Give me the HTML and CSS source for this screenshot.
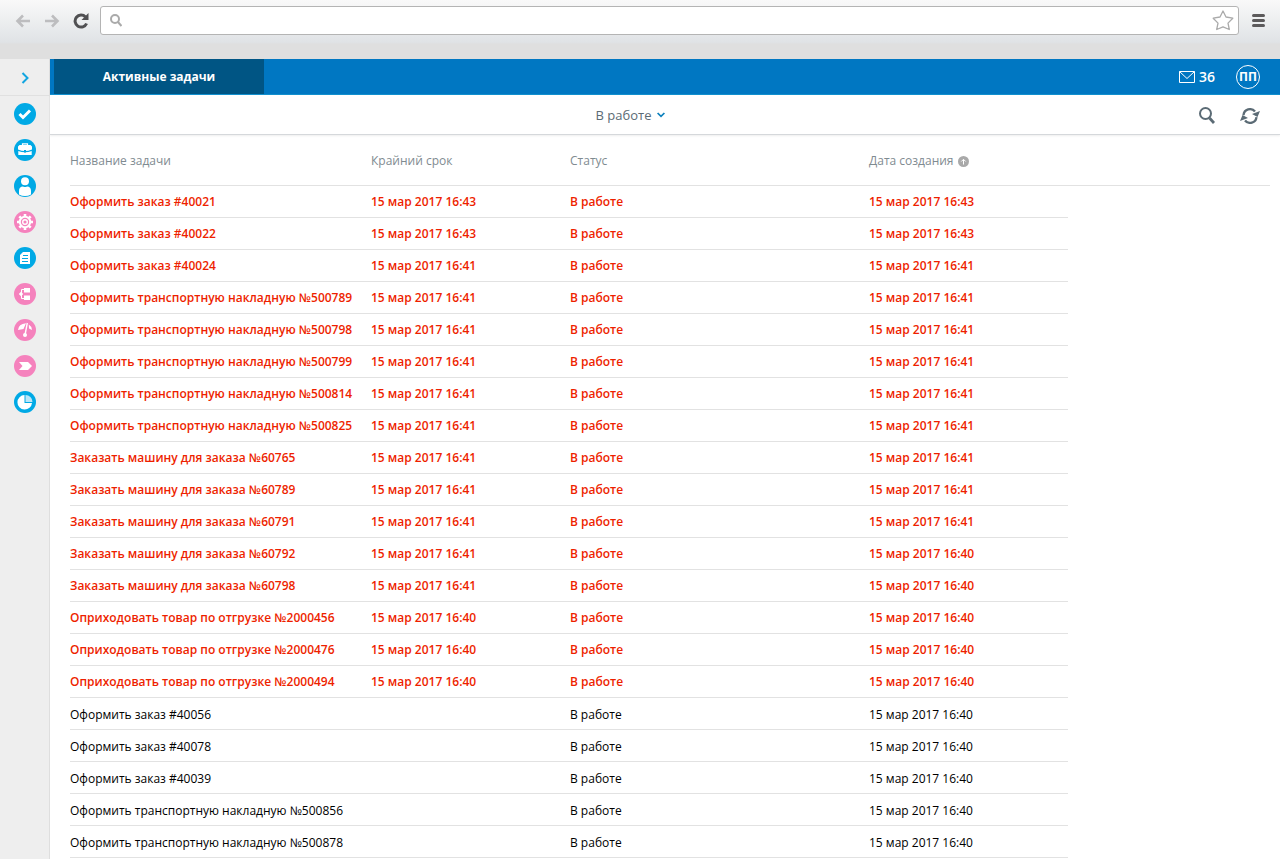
FILE: index.html
```html
<!DOCTYPE html>
<html lang="ru">
<head>
<meta charset="utf-8">
<title>Активные задачи</title>
<link rel="stylesheet" href="styles.css">
</head>
<body>
<div class="browser">
  <button class="nav-button" aria-label="Назад"><svg width="16" height="14" viewBox="0 0 16 14" fill="none" stroke="#bdbdbf" stroke-width="2.6"><path d="M8 1.500 2.500 7l5.500 5.500M2 7h13"/></svg></button>
  <button class="nav-button" aria-label="Вперёд"><svg width="16" height="14" viewBox="0 0 16 14" fill="none" stroke="#bdbdbf" stroke-width="2.6"><path d="m8 1.500 5.500 5.500L8 12.500M14 7H1"/></svg></button>
  <button class="nav-button" aria-label="Обновить страницу"><svg width="16" height="16" viewBox="0 0 16 16"><path d="M12.5 4A6 6 0 1 0 13.6 10.5" fill="none" stroke="#505052" stroke-width="3"/><path d="M15.5 0v7H8.5z" fill="#505052"/></svg></button>
  <div class="address">
    <svg width="12" height="13" viewBox="0 0 12 13" fill="none" stroke="#aaa" stroke-width="2"><circle cx="5" cy="5" r="4"/><path d="m8 8 3.500 4"/></svg>
    <input class="address-input" type="text" aria-label="Адрес">
    <button class="star" aria-label="В закладки"><svg width="22" height="21" viewBox="0 0 22 21" fill="#fff" stroke="#aaa" stroke-width="1.300" stroke-linejoin="round"><path d="m11 1 3 6 6.800 1.200-4.800 4.900 1.300 6.400L11 16.800l-6.300 2.700L6 13.100 1.200 8.200 8 7z"/></svg></button>
  </div>
  <button class="nav-button" aria-label="Меню"><svg width="13" height="13" viewBox="0 0 13 13" stroke="#5c5a5b" stroke-width="3" stroke-linecap="round"><path d="M1.500 1.500h10M1.500 6.500h10M1.500 11.500h10"/></svg></button>
</div>
<div class="app">
  <nav class="sidebar" aria-label="Разделы">
    <button class="expand" aria-label="Развернуть"><svg width="8" height="12" viewBox="0 0 8 12" fill="none" stroke="#12a5e0" stroke-width="2"><path d="m1.500 1 5 5-5 5"/></svg></button>
    <a class="section" href="#" aria-label="Задачи"><svg viewBox="0 0 22 22"><circle cx="11" cy="11" r="11" fill="#00a9e5"/><path d="m5.500 11 3.500 3.500 7-7" fill="none" stroke="#fff" stroke-width="3"/></svg></a>
    <a class="section" href="#" aria-label="Портфель"><svg viewBox="0 0 22 22"><circle cx="11" cy="11" r="11" fill="#00a9e5"/><path d="M8.500 6.500V4.800h5v1.700" fill="none" stroke="#fff" stroke-width="1.200"/><path d="M5.500 6h11L18 7.500v3q-7 3-14 0v-3zM4.300 12q6.700 2.600 13.400 0v4H4.300z" fill="#fff"/><path d="M10 11h2v2.500h-2z" fill="#00a9e5"/></svg></a>
    <a class="section" href="#" aria-label="Сотрудники"><svg viewBox="0 0 22 22"><circle cx="11" cy="11" r="11" fill="#00a9e5"/><circle cx="11" cy="6.200" r="4" fill="#fff"/><path d="M5 19.500v-3.500q0-4.500 4-4.500 2 1 4 0 4 0 4 4.500v3.500q-6 3-12 0z" fill="#fff"/></svg></a>
    <a class="section" href="#" aria-label="Настройки"><svg viewBox="0 0 22 22"><circle cx="11" cy="11" r="11" fill="#f582bd"/><circle cx="11" cy="11" r="5.200" fill="none" stroke="#fff" stroke-width="2"/><circle cx="11" cy="11" r="2.300" fill="none" stroke="#fff" stroke-width="1.400"/><path d="M11 3v2.500M11 16.500V19M3 11h2.500M16.500 11H19M5.300 5.300l1.800 1.800M14.900 14.900l1.800 1.800M5.300 16.700l1.800-1.800M14.900 7.100l1.800-1.800" stroke="#fff" stroke-width="2.600"/></svg></a>
    <a class="section" href="#" aria-label="Документы"><svg viewBox="0 0 22 22"><circle cx="11" cy="11" r="11" fill="#00a9e5"/><path d="M9 5h7v12H6V8z" fill="#fff"/><path d="M9 8.500h5M8 11.500h6M8 14.500h6" stroke="#00a9e5"/></svg></a>
    <a class="section" href="#" aria-label="Процессы"><svg viewBox="0 0 22 22"><circle cx="11" cy="11" r="11" fill="#f582bd"/><path d="M10 5h6v4.500h-6zM10 12.500h6V17h-6z" fill="#fff"/><path d="M10 6.500H7.500v9H10" fill="none" stroke="#fff" stroke-width="1"/><path d="M7 8.800 9.200 11 7 13.200 4.800 11z" fill="#fff"/></svg></a>
    <a class="section" href="#" aria-label="Показатели"><svg viewBox="0 0 22 22"><circle cx="11" cy="11" r="11" fill="#f582bd"/><path d="M4 11Q4.500 4.800 12 4.200L9.500 10zM14.800 5.500Q17.500 7 18 11l-3-1.500z" fill="#fff"/><path d="M13.300 4 11 16" stroke="#fff" stroke-width="1.400"/><circle cx="11" cy="16" r="2" fill="#fff"/></svg></a>
    <a class="section" href="#" aria-label="Этапы"><svg viewBox="0 0 22 22"><circle cx="11" cy="11" r="11" fill="#f582bd"/><path d="M5 7h9l4 4-4 4H5l3.500-4z" fill="#fff"/></svg></a>
    <a class="section" href="#" aria-label="Отчёты"><svg viewBox="0 0 22 22"><circle cx="11" cy="11" r="11" fill="#00a9e5"/><path d="M10.500 4v8H18A7.300 7.300 0 1 1 10.500 4z" fill="#fff"/><path d="M11.500 4v7H18.500A7 7 0 0 0 11.500 4z" fill="#b9e6f8"/></svg></a>
  </nav>
  <main class="main">
    <header class="topbar">
      <a class="tab" href="#">Активные задачи</a>
      <div class="account">
        <a class="mail" href="#"><svg width="16" height="12" viewBox="0 0 16 12" fill="none" stroke="#fff"><path d="M.5.5h15v11H.5zL8 7.500l7.500-7"/></svg>36</a>
        <button class="avatar">ПП</button>
      </div>
    </header>
    <div class="toolbar">
      <div class="filter-area">
        <button class="filter">В работе<svg width="8" height="6" viewBox="0 0 8 6" fill="none" stroke="#0b80bd" stroke-width="1.700"><path d="m.6 1 3.400 3.400L7.400 1"/></svg></button>
      </div>
      <div class="tools">
        <button class="tool" aria-label="Поиск"><svg width="16" height="17" viewBox="0 0 16 17" fill="none" stroke="#5b6b75" stroke-width="2"><circle cx="6.500" cy="6.500" r="5.500"/><path d="m10.500 11 4.500 5" stroke-width="2.800"/></svg></button>
        <button class="tool" aria-label="Обновить"><svg width="20" height="16" viewBox="0 0 20 16"><path d="M3.500 7A6.500 6.500 0 0 1 15 3.600M16.500 9A6.500 6.500 0 0 1 5 12.400" fill="none" stroke="#5b6b75" stroke-width="2.300"/><path d="m20 3-2.500 6L12 6zM0 13l2.500-6L8 10z" fill="#5b6b75"/></svg></button>
      </div>
    </div>
    <div class="content">
      <table class="tasks">
        <colgroup><col class="col-name"><col class="col-due"><col class="col-status"><col class="col-created"><col></colgroup>
        <thead><tr><th>Название задачи</th><th>Крайний срок</th><th>Статус</th><th>Дата создания<svg class="sort" width="11" height="11" viewBox="0 0 11 11"><circle cx="5.500" cy="5.500" r="5.500" fill="#a9a9a9"/><path d="M5.500 8.500v-5M3.300 5.500l2.200-2.200 2.200 2.200" fill="none" stroke="#fff"/></svg></th><th></th></tr></thead>
        <tbody class="overdue">
          <tr><td>Оформить заказ #40021</td><td>15 мар 2017 16:43</td><td>В работе</td><td>15 мар 2017 16:43</td></tr>
          <tr><td>Оформить заказ #40022</td><td>15 мар 2017 16:43</td><td>В работе</td><td>15 мар 2017 16:43</td></tr>
          <tr><td>Оформить заказ #40024</td><td>15 мар 2017 16:41</td><td>В работе</td><td>15 мар 2017 16:41</td></tr>
          <tr><td>Оформить транспортную накладную №500789</td><td>15 мар 2017 16:41</td><td>В работе</td><td>15 мар 2017 16:41</td></tr>
          <tr><td>Оформить транспортную накладную №500798</td><td>15 мар 2017 16:41</td><td>В работе</td><td>15 мар 2017 16:41</td></tr>
          <tr><td>Оформить транспортную накладную №500799</td><td>15 мар 2017 16:41</td><td>В работе</td><td>15 мар 2017 16:41</td></tr>
          <tr><td>Оформить транспортную накладную №500814</td><td>15 мар 2017 16:41</td><td>В работе</td><td>15 мар 2017 16:41</td></tr>
          <tr><td>Оформить транспортную накладную №500825</td><td>15 мар 2017 16:41</td><td>В работе</td><td>15 мар 2017 16:41</td></tr>
          <tr><td>Заказать машину для заказа №60765</td><td>15 мар 2017 16:41</td><td>В работе</td><td>15 мар 2017 16:41</td></tr>
          <tr><td>Заказать машину для заказа №60789</td><td>15 мар 2017 16:41</td><td>В работе</td><td>15 мар 2017 16:41</td></tr>
          <tr><td>Заказать машину для заказа №60791</td><td>15 мар 2017 16:41</td><td>В работе</td><td>15 мар 2017 16:41</td></tr>
          <tr><td>Заказать машину для заказа №60792</td><td>15 мар 2017 16:41</td><td>В работе</td><td>15 мар 2017 16:40</td></tr>
          <tr><td>Заказать машину для заказа №60798</td><td>15 мар 2017 16:41</td><td>В работе</td><td>15 мар 2017 16:40</td></tr>
          <tr><td>Оприходовать товар по отгрузке №2000456</td><td>15 мар 2017 16:40</td><td>В работе</td><td>15 мар 2017 16:40</td></tr>
          <tr><td>Оприходовать товар по отгрузке №2000476</td><td>15 мар 2017 16:40</td><td>В работе</td><td>15 мар 2017 16:40</td></tr>
          <tr><td>Оприходовать товар по отгрузке №2000494</td><td>15 мар 2017 16:40</td><td>В работе</td><td>15 мар 2017 16:40</td></tr>
        </tbody>
        <tbody class="current">
          <tr><td>Оформить заказ #40056</td><td></td><td>В работе</td><td>15 мар 2017 16:40</td></tr>
          <tr><td>Оформить заказ #40078</td><td></td><td>В работе</td><td>15 мар 2017 16:40</td></tr>
          <tr><td>Оформить заказ #40039</td><td></td><td>В работе</td><td>15 мар 2017 16:40</td></tr>
          <tr><td>Оформить транспортную накладную №500856</td><td></td><td>В работе</td><td>15 мар 2017 16:40</td></tr>
          <tr><td>Оформить транспортную накладную №500878</td><td></td><td>В работе</td><td>15 мар 2017 16:40</td></tr>
        </tbody>
      </table>
    </div>
  </main>
</div>
</body>
</html>
```
FILE: styles.css
```css
* { box-sizing: border-box; }

body {
  margin: 0;
  min-height: 100vh;
  display: flex;
  flex-direction: column;
  background: #fff;
  font-family: "Open Sans", "Noto Sans", sans-serif;
  font-size: 12px;
  line-height: 16px;
}

button, input {
  margin: 0;
  padding: 0;
  border: 0;
  background: none;
  color: inherit;
  font: inherit;
}

a { color: inherit; text-decoration: none; }
svg { display: block; flex: none; }

.browser {
  display: flex;
  align-items: flex-start;
  gap: 13px;
  height: 59px;
  padding: 6px 15px 0;
  background: linear-gradient(#f9f9f9, #e0e3e6 42px, #dfdfdf 44px, #dfdfdf);
}

.nav-button { display: flex; align-items: center; height: 29px; }

.address {
  flex: 1;
  display: flex;
  align-items: center;
  gap: 8px;
  height: 29px;
  margin-left: -2px;
  padding: 0 4px 0 9px;
  border: 1px solid #b4b4b4;
  border-radius: 3px;
  background: #fff;
}

.address-input { flex: 1; min-width: 0; height: 24px; outline: 0; }

.app { flex: 1; display: flex; }

.sidebar {
  width: 50px;
  flex: none;
  background: #eee;
  border-right: 1px solid #dedede;
}

.expand {
  display: flex;
  align-items: center;
  justify-content: center;
  width: 100%;
  height: 37px;
  padding: 1px 0 0 1px;
  border-bottom: 1px solid #e0e0e0;
}

.section {
  display: flex;
  align-items: center;
  justify-content: center;
  height: 36px;
}

.section svg { width: 22px; height: 22px; }

.main { flex: 1; min-width: 0; }

.topbar {
  display: flex;
  align-items: stretch;
  justify-content: space-between;
  height: 36px;
  padding: 0 20px 0 4px;
  border-bottom: 1px solid #0089cc;
  background: #0077c2;
  color: #fff;
  font-weight: 600;
}

.tab {
  display: flex;
  align-items: center;
  justify-content: center;
  width: 210px;
  background: #005584;
  font-weight: 700;
}

.account { display: flex; align-items: center; gap: 21px; }

.mail {
  display: flex;
  align-items: center;
  gap: 4px;
  font-size: 14px;
}

.avatar {
  width: 24px;
  height: 24px;
  border: 1px solid #fff;
  border-radius: 50%;
  font-weight: 700;
}

.toolbar {
  display: flex;
  align-items: center;
  height: 40px;
  padding-right: 20px;
  border-bottom: 1px solid #d5d8db;
  box-shadow: 0 1px 2px #eee;
}

.filter-area {
  flex: 1;
  display: flex;
  justify-content: center;
  padding-left: 12px;
}

.filter {
  display: flex;
  align-items: center;
  gap: 6px;
  color: #5b6b75;
  font-size: 13px;
}

.tools { display: flex; align-items: center; gap: 25px; padding-top: 2px; }

.content { padding: 0 10px 0 20px; }

.tasks {
  width: 100%;
  table-layout: fixed;
  border-collapse: separate;
  border-spacing: 0;
}

.col-name { width: 301px; }
.col-due, .col-created { width: 199px; }
.col-status { width: 299px; }

.tasks th, .tasks td {
  padding: 0;
  border-bottom: 1px solid #e2e2e2;
  text-align: left;
  white-space: nowrap;
}

.tasks th { height: 51px; padding-top: 2px; color: #7f8b91; font-weight: 400; }
.tasks td { height: 32px; }
.overdue { color: #ee1f00; font-weight: 600; }
.current { color: #000; }
.current td { padding-top: 2px; }

.sort { display: inline-block; margin-left: 4px; vertical-align: -2px; }
```
